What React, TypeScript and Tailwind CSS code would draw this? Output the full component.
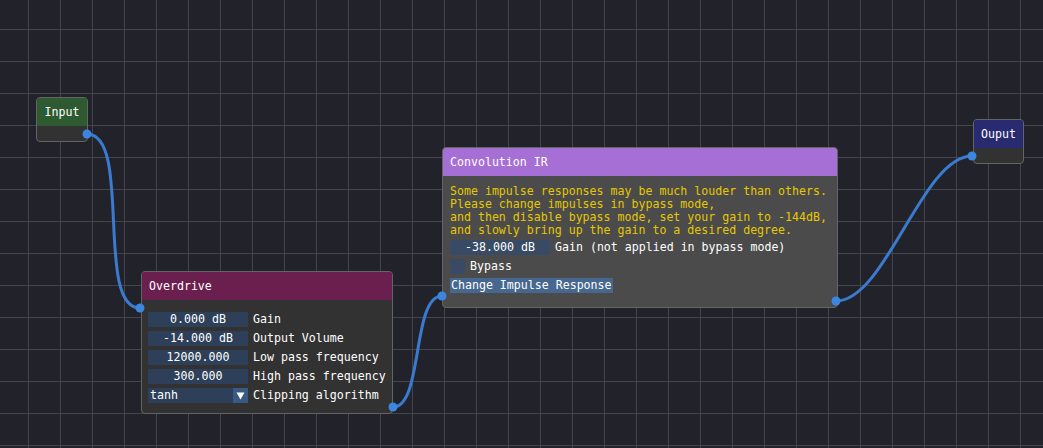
import React from 'react';

const font = "font-['DejaVu_Sans_Mono','Liberation_Mono',monospace] text-[11.6px] leading-[13px]";

type Pin = { x: number; y: number };

// links between node pins, drawn as imnodes does: offset = 0.25 * length
const links: [Pin, Pin][] = [
  [{ x: 87, y: 134 }, { x: 140, y: 308 }],
  [{ x: 393, y: 407 }, { x: 442, y: 296 }],
  [{ x: 836, y: 301 }, { x: 972, y: 156 }],
];

function linkPath([a, b]: [Pin, Pin]) {
  const len = Math.hypot(b.x - a.x, b.y - a.y);
  const off = len * 0.25;
  return `M${a.x} ${a.y} C${a.x + off} ${a.y} ${b.x - off} ${b.y} ${b.x} ${b.y}`;
}

function Field({ value, dark }: { value: string; dark?: boolean }) {
  return (
    <div
      className={`w-[100px] h-[15px] flex items-center justify-center text-white ${
        dark ? 'bg-[#2d3f59]' : 'bg-[#384a64]'
      }`}
    >
      {value}
    </div>
  );
}

function Row({ children, label }: { children: React.ReactNode; label: string }) {
  return (
    <div className="flex items-center gap-[5px] h-[15px]">
      {children}
      <span className="text-white whitespace-nowrap">{label}</span>
    </div>
  );
}

function Overdrive() {
  const rows = [
    ['0.000 dB', 'Gain'],
    ['-14.000 dB', 'Output Volume'],
    ['12000.000', 'Low pass frequency'],
    ['300.000', 'High pass frequency'],
  ];
  return (
    <div className="absolute left-[141px] top-[271px] w-[252px] h-[143px] rounded-[4px] border border-[#646464] bg-[#323232] overflow-hidden">
      <div className="h-[28px] bg-[#6b1f4e] flex items-center px-[7px] text-white">Overdrive</div>
      <div className="flex flex-col gap-[4px] pt-[12px] pl-[6px]">
        {rows.map(([v, l]) => (
          <Row key={l} label={l}>
            <Field value={v} dark />
          </Row>
        ))}
        <Row label="Clipping algorithm">
          <div className="w-[100px] h-[15px] flex bg-[#2d3f59]">
            <span className="flex-1 pl-[2px] text-white leading-[15px]">tanh</span>
            <div className="w-[15px] h-[15px] bg-[#385a82] flex items-center justify-center">
              <svg width="9" height="8" viewBox="0 0 9 8">
                <path d="M0.5 0.5 H8.5 L4.5 7.5 Z" fill="#fff" />
              </svg>
            </div>
          </div>
        </Row>
      </div>
    </div>
  );
}

function ConvolutionIR() {
  return (
    <div className="absolute left-[442px] top-[147px] w-[396px] h-[161px] rounded-[4px] border border-[#646464] bg-[#4b4b4b] overflow-hidden">
      <div className="h-[28px] bg-[#a66fd6] flex items-center px-[7px] text-white">Convolution IR</div>
      <div className="flex flex-col gap-[4px] pt-[9px] pl-[7px]">
        <p className="text-[#e6c800] whitespace-pre mb-[-1px]">
          {'Some impulse responses may be much louder than others.\nPlease change impulses in bypass mode,\nand then disable bypass mode, set your gain to -144dB,\nand slowly bring up the gain to a desired degree.'}
        </p>
        <Row label="Gain (not applied in bypass mode)">
          <Field value="-38.000 dB" />
        </Row>
        <Row label="Bypass">
          <div className="w-[15px] h-[15px] bg-[#384a64]" />
        </Row>
        <div className="h-[15px] flex">
          <div className="bg-[#46678f] text-white px-[1px] leading-[15px]">Change Impulse Response</div>
        </div>
      </div>
    </div>
  );
}

function SmallNode({ left, top, title, color, w }: { left: string; top: string; title: string; color: string; w: string }) {
  return (
    <div className={`absolute ${left} ${top} ${w} h-[45px] rounded-[4px] border border-[#646464] bg-[#323232] overflow-hidden`}>
      <div className={`h-[28px] ${color} flex items-center justify-center text-white`}>{title}</div>
    </div>
  );
}

export default function App() {
  const pins: Pin[] = [
    { x: 87, y: 134 },
    { x: 140, y: 308 },
    { x: 393, y: 407 },
    { x: 442, y: 296 },
    { x: 836, y: 301 },
    { x: 972, y: 156 },
  ];
  return (
    <div
      className={`relative w-[1043px] h-[448px] overflow-hidden bg-[#22232a] ${font} bg-[linear-gradient(to_right,#44454c_1px,transparent_1px),linear-gradient(to_bottom,#44454c_1px,transparent_1px)] bg-[size:32px_32px] bg-[position:28px_29px]`}
    >
      <SmallNode left="left-[36px]" top="top-[97px]" w="w-[52px]" title="Input" color="bg-[#2e5a31]" />
      <SmallNode left="left-[973px]" top="top-[119px]" w="w-[51px]" title="Ouput" color="bg-[#282b70]" />
      <Overdrive />
      <ConvolutionIR />

      <svg className="absolute inset-0 pointer-events-none" width="1043" height="448">
        {links.map((l, i) => (
          <path key={i} d={linkPath(l)} stroke="#3a7bd0" strokeWidth="3" fill="none" />
        ))}
        {pins.map((p, i) => (
          <circle key={i} cx={p.x} cy={p.y} r="4.5" fill="#3d86e0" />
        ))}
      </svg>
    </div>
  );
}
